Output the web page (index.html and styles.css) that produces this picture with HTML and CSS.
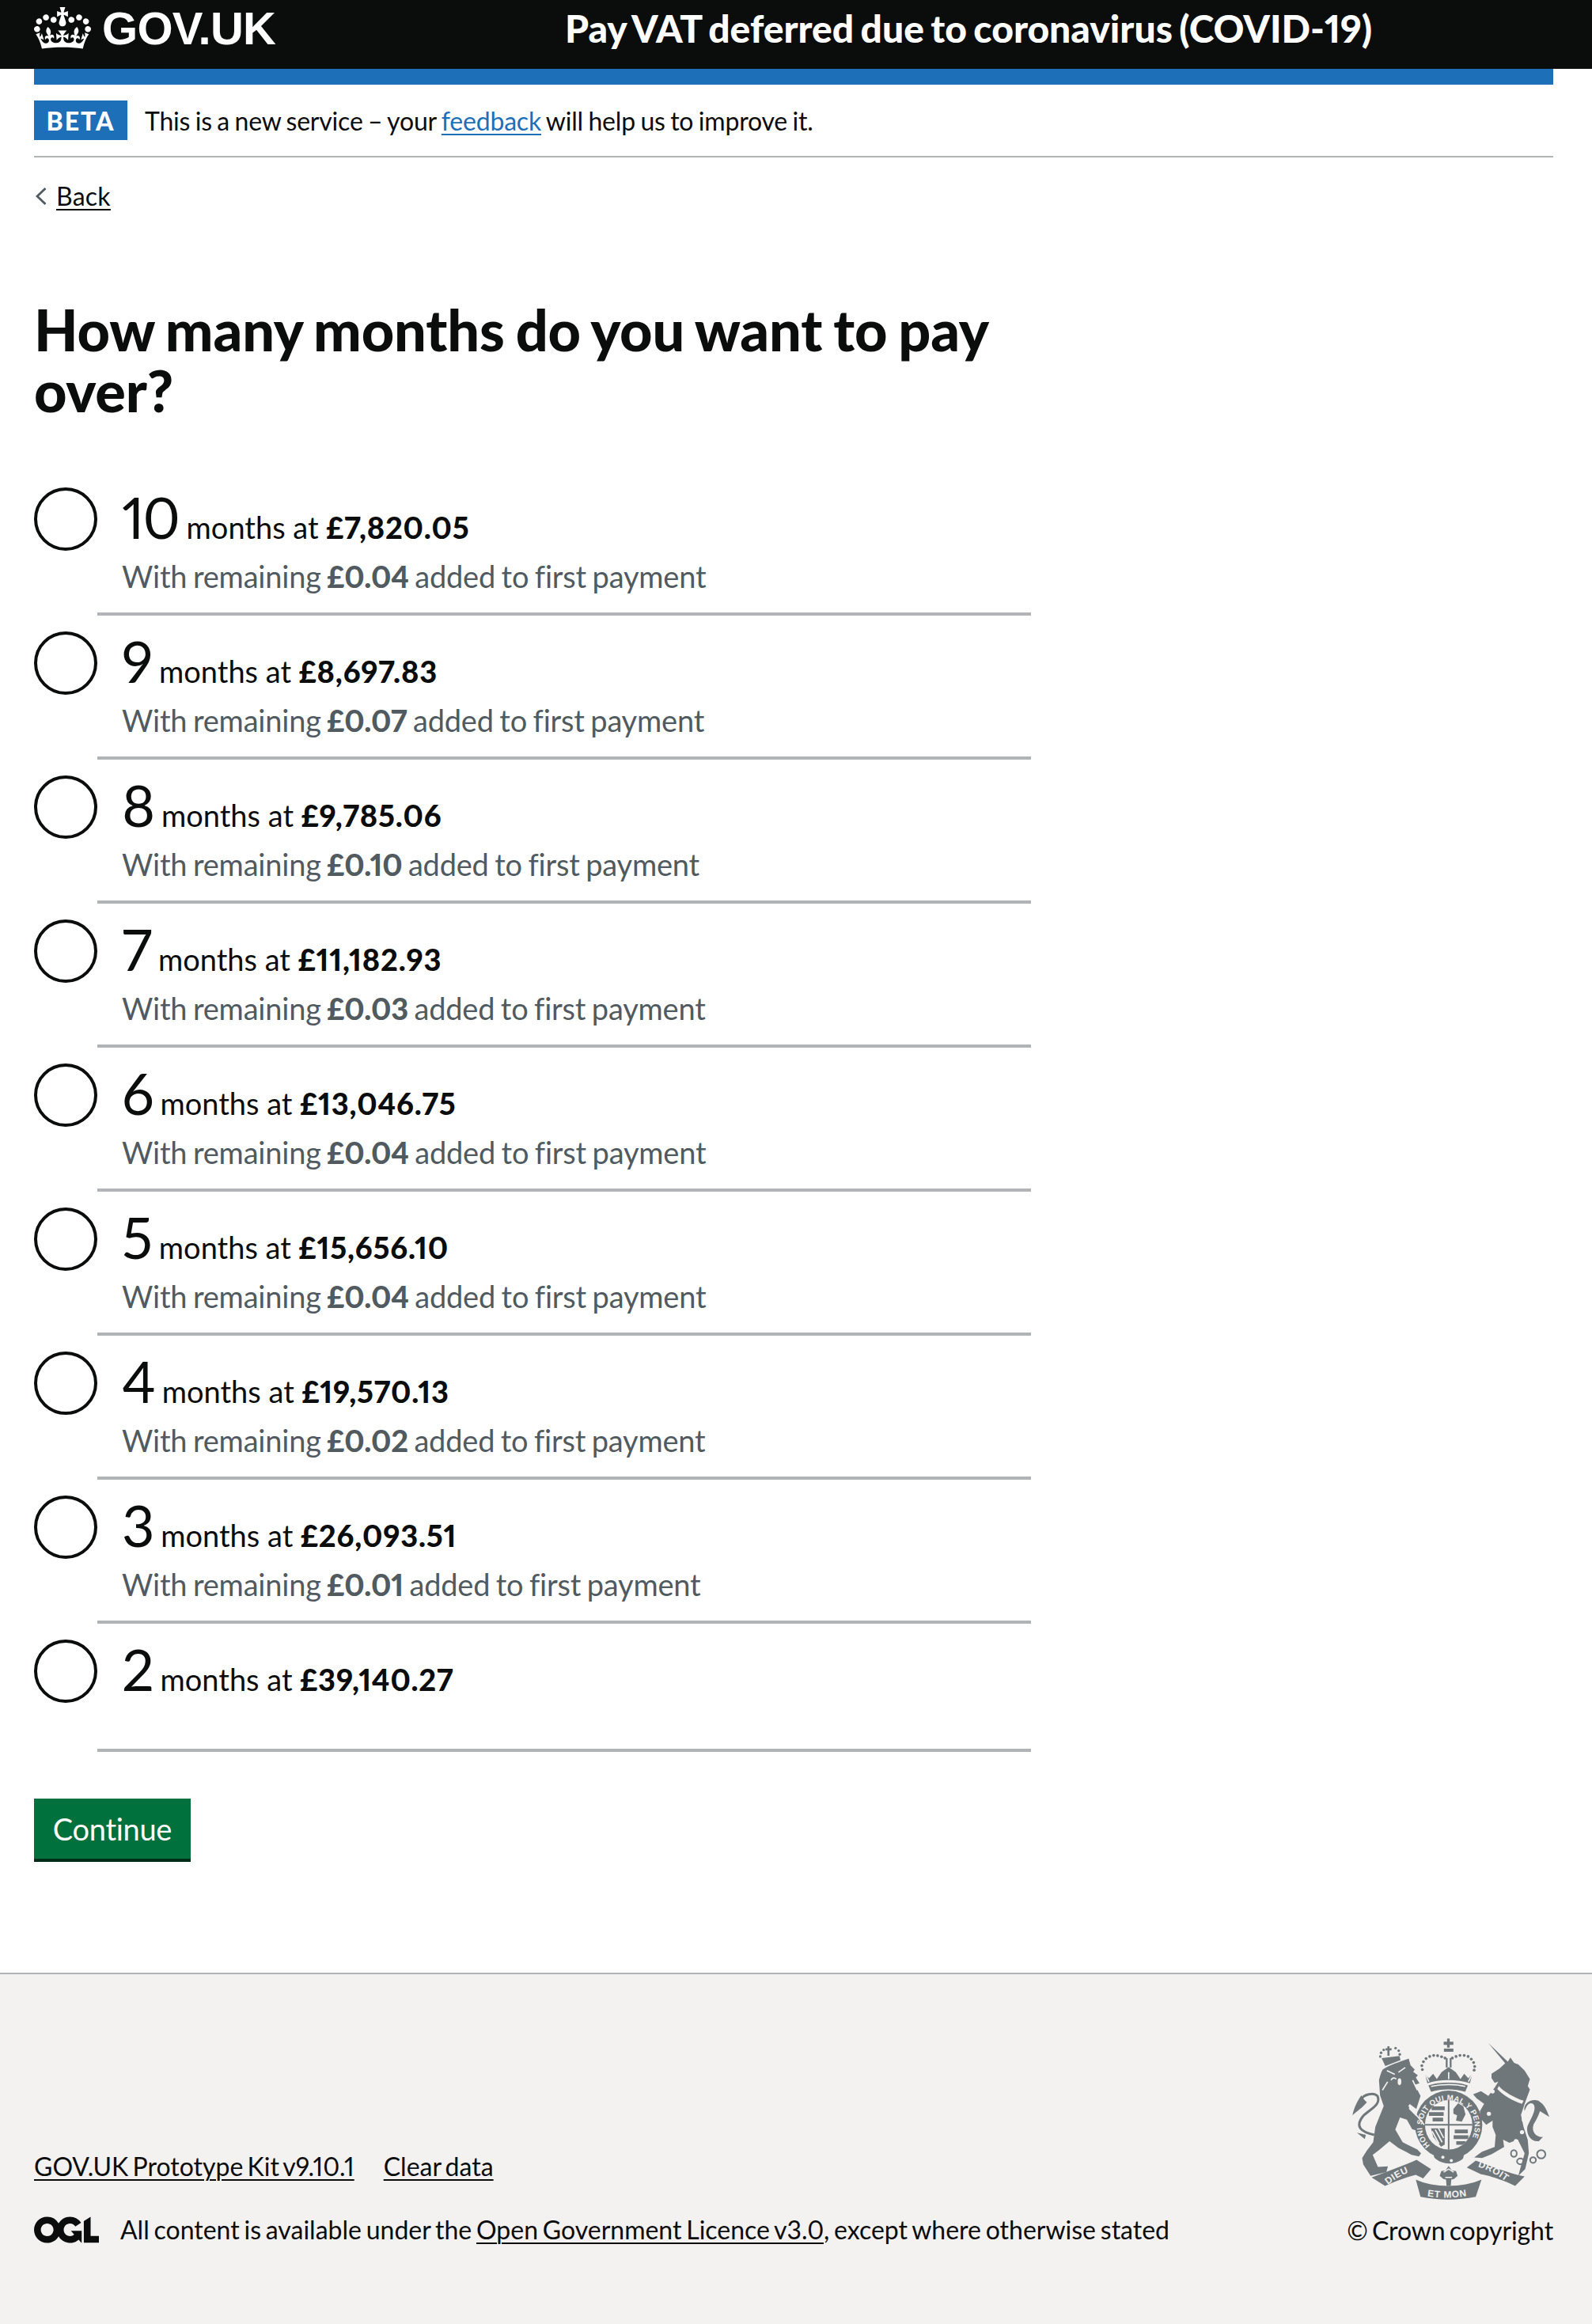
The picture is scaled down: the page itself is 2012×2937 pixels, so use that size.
FILE: index.html
```html
<!DOCTYPE html>
<html lang="en">
<head>
<meta charset="utf-8">
<title>How many months do you want to pay over?</title>
<link rel="stylesheet" href="styles.css">
</head>
<body>
<header class="top">
  <div class="top-inner">
    <a class="logo" href="#">
      <svg class="crown" viewBox="0 0 132 97" aria-hidden="true"><path fill="#fff" fill-rule="evenodd" d="M25 30.2c3.5 1.5 7.7-.2 9.1-3.7 1.5-3.6-.2-7.8-3.9-9.2-3.6-1.4-7.6.3-9.1 3.9-1.4 3.5.3 7.5 3.9 9zM9 39.5c3.6 1.5 7.8-.2 9.2-3.7 1.5-3.6-.2-7.8-3.9-9.1-3.6-1.5-7.6.2-9.1 3.8-1.4 3.5.3 7.5 3.8 9zM4.4 57.2c3.5 1.5 7.7-.2 9.1-3.8 1.5-3.6-.2-7.7-3.9-9.1-3.5-1.5-7.6.3-9.1 3.8-1.4 3.5.3 7.6 3.9 9.1zm38.3-21.4c3.5 1.5 7.7-.2 9.1-3.8 1.5-3.6-.2-7.7-3.9-9.1-3.6-1.5-7.6.3-9.1 3.8-1.3 3.6.4 7.7 3.9 9.1zm64.4-5.6c-3.6 1.5-7.8-.2-9.1-3.7-1.5-3.6.2-7.8 3.8-9.2 3.6-1.4 7.7.3 9.2 3.9 1.3 3.5-.4 7.5-3.9 9zm15.9 9.3c-3.6 1.5-7.7-.2-9.1-3.7-1.5-3.6.2-7.8 3.7-9.1 3.6-1.5 7.7.2 9.2 3.8 1.5 3.5-.3 7.5-3.8 9zm4.7 17.7c-3.6 1.5-7.8-.2-9.2-3.8-1.5-3.6.2-7.7 3.9-9.1 3.6-1.5 7.7.3 9.2 3.8 1.3 3.5-.4 7.6-3.9 9.1zM89.3 35.8c-3.6 1.5-7.8-.2-9.2-3.8-1.4-3.6.2-7.7 3.9-9.1 3.6-1.5 7.7.3 9.2 3.8 1.4 3.6-.3 7.7-3.9 9.1zM69.7 17.7l8.9 4.7V9.3l-8.9 2.8c-.2-.3-.5-.6-.9-.9L72.4 0H59.6l3.5 11.2c-.3.3-.6.5-.9.9l-8.8-2.8v13.1l8.8-4.7c.3.3.6.7.9.9l-5 15.4v.1c-.2.8-.4 1.6-.4 2.4 0 4.1 3.1 7.5 7 8.1h.2c.3 0 .7.1 1 .1.4 0 .7 0 1-.1h.2c4-.6 7.1-4.1 7.1-8.1 0-.8-.1-1.7-.4-2.4V34l-5.1-15.4c.4-.2.7-.6 1-.9zM66 92.8c16.9 0 32.8 1.1 47.1 3.2 4-16.9 8.9-26.7 14-33.5l-9.6-3.4c1 4.9 1.1 7.2 0 10.2-1.5-1.4-3-4.3-4.2-8.7L108.6 76c2.8-2 5-3.2 7.5-3.3-4.4 9.4-10 11.9-13.6 11.2-4.3-.8-6.3-4.6-5.6-7.9 1-4.7 5.7-5.9 8-.5 4.3-8.7-3-11.4-7.6-8.8 7.1-7.2 7.9-13.5 2.1-21.1-8 6.1-8.1 12.3-4.5 20.8-4.7-5.4-12.1-2.5-9.5 6.2 3.4-5.2 7.9-2 7.2 3.1-.6 4.3-6.4 7.8-13.5 7.2-10.3-.9-10.9-8-11.2-13.8 2.5-.5 7.1 1.8 11 7.3L80.2 60c-4.1 4.4-8 5.3-12.3 5.4 1.4-4.4 8-11.6 8-11.6H55.5s6.4 7.2 7.9 11.6c-4.2-.1-8-1-12.3-5.4l1.4 16.4c3.9-5.5 8.5-7.7 10.9-7.3-.3 5.8-.9 12.8-11.1 13.8-7.2.6-12.9-2.9-13.5-7.2-.7-5 3.8-8.3 7.1-3.1 2.7-8.7-4.6-11.6-9.4-6.2 3.7-8.5 3.6-14.7-4.6-20.8-5.8 7.6-5 13.9 2.2 21.1-4.7-2.6-11.9.1-7.7 8.8 2.3-5.5 7.1-4.2 8.1.5.7 3.3-1.3 7.1-5.7 7.9-3.5.7-9-1.8-13.5-11.2 2.5.1 4.7 1.3 7.5 3.3l-4.7-15.4c-1.2 4.4-2.7 7.2-4.3 8.7-1.1-3-.9-5.3 0-10.2l-9.5 3.4c5 6.9 9.9 16.7 14 33.5 14.8-2.1 30.8-3.2 47.7-3.2z"/></svg>
      <span class="logo-text">GOV.UK</span>
    </a>
    <a class="service" href="#">Pay VAT deferred due to coronavirus (COVID-19)</a>
  </div>
</header>
<div class="wrap">
  <div class="blue-bar"></div>
  <div class="phase">
    <strong class="tag">BETA</strong>
    <span class="phase-text">This is a new service – your <a class="link-blue" href="#">feedback</a> will help us to improve it.</span>
  </div>
  <a class="back" href="#"><svg class="chev" viewBox="0 0 14 22" aria-hidden="true"><path d="M12.5 1 2 11l10.5 10" fill="none" stroke="#505a5f" stroke-width="2.8"/></svg><span class="back-text">Back</span></a>
  <main>
    <h1 class="title">How many months do you want to pay over?</h1>
    <form class="rows">
      <label class="row"><input class="radio" type="radio" name="m"><span class="body"><span class="main-line"><span class="num">10</span> months at <b>£7,820.05</b></span><span class="hint">With remaining <b>£0.04</b> added to first payment</span></span></label>
      <label class="row"><input class="radio" type="radio" name="m"><span class="body"><span class="main-line"><span class="num">9</span> months at <b>£8,697.83</b></span><span class="hint">With remaining <b>£0.07</b> added to first payment</span></span></label>
      <label class="row"><input class="radio" type="radio" name="m"><span class="body"><span class="main-line"><span class="num">8</span> months at <b>£9,785.06</b></span><span class="hint">With remaining <b>£0.10</b> added to first payment</span></span></label>
      <label class="row"><input class="radio" type="radio" name="m"><span class="body"><span class="main-line"><span class="num">7</span> months at <b>£11,182.93</b></span><span class="hint">With remaining <b>£0.03</b> added to first payment</span></span></label>
      <label class="row"><input class="radio" type="radio" name="m"><span class="body"><span class="main-line"><span class="num">6</span> months at <b>£13,046.75</b></span><span class="hint">With remaining <b>£0.04</b> added to first payment</span></span></label>
      <label class="row"><input class="radio" type="radio" name="m"><span class="body"><span class="main-line"><span class="num">5</span> months at <b>£15,656.10</b></span><span class="hint">With remaining <b>£0.04</b> added to first payment</span></span></label>
      <label class="row"><input class="radio" type="radio" name="m"><span class="body"><span class="main-line"><span class="num">4</span> months at <b>£19,570.13</b></span><span class="hint">With remaining <b>£0.02</b> added to first payment</span></span></label>
      <label class="row"><input class="radio" type="radio" name="m"><span class="body"><span class="main-line"><span class="num">3</span> months at <b>£26,093.51</b></span><span class="hint">With remaining <b>£0.01</b> added to first payment</span></span></label>
      <label class="row row-last"><input class="radio" type="radio" name="m"><span class="body"><span class="main-line"><span class="num">2</span> months at <b>£39,140.27</b></span></span></label>
      <button class="continue" type="button">Continue</button>
    </form>
  </main>
</div>
<footer class="foot">
  <div class="foot-inner">
    <div class="foot-left">
      <div class="foot-links"><a href="#">GOV.UK Prototype Kit v9.10.1</a><a href="#">Clear data</a></div>
      <div class="licence">
        <svg class="ogl" viewBox="0 0 483.2 195.7" aria-hidden="true"><path fill="#0b0c0c" d="M421.5 142.8V.1l-50.7 32.3v161.1h112.4v-50.7zm-122.3-9.6A47.12 47.12 0 0 1 221 97.8c0-26 21.1-47.1 47.1-47.1 16.7 0 31.4 8.7 39.7 21.8l42.7-27.2A97.63 97.63 0 0 0 268.1 0c-36.5 0-68.3 20.1-85.1 49.7A98 98 0 0 0 97.8 0C43.9 0 0 43.9 0 97.8s43.9 97.8 97.8 97.8c36.5 0 68.3-20.1 85.1-49.7a97.76 97.76 0 0 0 149.6 25.4l19.4 22.2h3v-87.8h-80l24.3 27.5zM97.8 145c-26 0-47.1-21.1-47.1-47.1s21.1-47.1 47.1-47.1 47.2 21 47.2 47S123.8 145 97.8 145"/></svg>
        <span>All content is available under the <a href="#">Open Government Licence v3.0</a>, except where otherwise stated</span>
      </div>
    </div>
    <div class="foot-right">
      <svg class="crest" viewBox="165 100 760 620" aria-hidden="true">
        <defs>
          <clipPath id="shieldClip"><ellipse cx="537" cy="432" rx="90" ry="94"/></clipPath>
          <path id="garterArc" d="M466 510A100 100 0 1 1 606 510"/>
          <path id="ribLeft" d="M306 660C340 632 380 612 416 602"/>
          <path id="ribMid" d="M448 702C500 712 570 712 626 698"/>
          <path id="ribRight" d="M648 592C690 604 735 628 772 662"/>
        </defs>
        <g class="crest-fill">
          <path d="M272 262C276 246 280 232 286 222C310 205 350 192 385 180L392 205L408 222L402 230L420 244L412 252L426 274L408 280L430 322L414 372L388 352L386 372L424 410L444 442L428 458L398 448L378 412L352 404L334 450L362 498L418 526L432 540L424 552L396 546L346 520L312 494L272 528L248 546L268 592L306 590L300 612L240 626L212 582L208 558L226 530L250 498L258 440L290 360L276 320Z"/>
          <path d="M205 320C186 346 176 372 171 396C190 378 208 368 226 346C216 338 210 330 205 320Z"/>
          <path d="M188 462L222 470L218 486Z"/>
          <path d="M282 178L350 170L354 186L296 208Z"/>
          <circle cx="277" cy="172" r="5"/><circle cx="280" cy="158" r="5"/><circle cx="290" cy="147" r="5"/><circle cx="335" cy="140" r="5"/><circle cx="347" cy="150" r="5"/><circle cx="351" cy="164" r="5"/>
          <path d="M297 141h7v-8h8v8h8v8h-8v20h-8v-20h-7Z"/>
          <path d="M688 121L762 192L772 176L786 196L802 202L826 226L846 258L838 284L846 298L826 352L812 394L822 440L838 490L842 540L828 600L802 626L810 596L826 540L800 488L768 500L744 488L748 516L700 544L664 558L634 556L664 534L712 516L716 470L704 440L704 416L680 432L660 410L656 380L672 352L644 332L630 316L660 304L688 322L712 290L726 268L712 272L700 254L700 238L730 218L752 198Z"/>
          <path d="M826 380C818 350 852 330 878 340C900 352 880 400 860 430C850 460 872 480 896 478L880 494C850 498 832 470 836 440C848 410 876 370 858 352C842 344 832 362 826 380Z"/>
          <path d="M870 340C896 344 908 370 920 402C905 392 890 384 876 374Z"/>
          <path d="M460 282C500 268 575 268 610 282L600 306C560 294 510 294 470 306Z"/>
          <path d="M447 238L462 255L478 238L492 258L510 232L537 212L564 232L582 258L596 238L612 255L627 238L618 274C570 258 500 258 456 274Z"/>
          <path d="M531 104h10v12h14v12h-14v10h-10v-10h-13v-12h13Z"/>
          <rect x="519" y="142" width="36" height="12"/>
          <rect x="526" y="178" width="7" height="36"/><rect x="541" y="178" width="7" height="36"/>
          <circle cx="437" cy="222" r="5.5"/><circle cx="435" cy="207" r="5.5"/><circle cx="441" cy="192" r="5.5"/><circle cx="451" cy="180" r="5.5"/><circle cx="465" cy="172" r="5.5"/><circle cx="480" cy="168" r="5.5"/><circle cx="495" cy="169" r="5.5"/><circle cx="510" cy="173" r="5.5"/><circle cx="523" cy="178" r="5.5"/>
          <circle cx="551" cy="178" r="5.5"/><circle cx="565" cy="172" r="5.5"/><circle cx="580" cy="168" r="5.5"/><circle cx="596" cy="168" r="5.5"/><circle cx="611" cy="172" r="5.5"/><circle cx="623" cy="182" r="5.5"/><circle cx="632" cy="195" r="5.5"/><circle cx="636" cy="210" r="5.5"/><circle cx="634" cy="224" r="5.5"/>
          <ellipse cx="537" cy="432" rx="128" ry="130"/>
          <path d="M476 520C510 546 566 546 600 524L592 560C565 586 510 586 482 556Z"/>
          <path d="M244 632C300 610 360 590 415 565L470 600L440 636L412 622C370 632 330 650 295 664Z"/>
          <path d="M606 594L640 568C700 590 770 618 826 628L790 664C740 640 680 622 660 620Z"/>
          <path d="M412 640C480 672 590 672 662 640L640 706C570 720 500 720 430 706Z"/>
          <path d="M537 588l12 18 16 2 6 18-14 12-10 2-2 24-16 0-2-24-10-2-14-12 6-18 16-2Z"/>
        </g>
        <g class="crest-bg">
          <circle cx="515" cy="555" r="6"/><circle cx="547" cy="568" r="6"/>
          <ellipse cx="537" cy="432" rx="90" ry="94"/>
          <ellipse cx="350" cy="268" rx="7" ry="13"/>
          <circle cx="825" cy="412" r="10"/><circle cx="816" cy="460" r="8"/><circle cx="793" cy="494" r="8"/>
          <circle cx="704" cy="305" r="8"/><circle cx="690" cy="390" r="8"/>
          <path d="M728 284C745 305 790 330 822 340L816 352C780 342 742 318 722 296Z"/>
        </g>
        <g class="crest-line">
          <path d="M302 226L332 240M372 214L346 232M338 258C330 250 322 254 318 262M385 358L444 432M285 300L305 268M400 262L418 300"/>
          <path d="M448 238L462 268M627 238L612 268M537 232V258M470 286C510 276 565 276 600 286"/>
          <path d="M518 612L537 600L556 612M524 632H550"/>
        </g>
        <g class="crest-ring">
          <ellipse cx="785" cy="541" rx="11" ry="13"/><ellipse cx="810" cy="571" rx="13" ry="11"/><circle cx="858" cy="566" r="11"/><circle cx="889" cy="544" r="16"/>
          <path class="crest-tail" d="M254 470C205 460 178 440 212 398C238 372 282 356 266 322C250 306 214 318 205 334"/>
        </g>
        <g clip-path="url(#shieldClip)">
          <g class="crest-fill">
            <path d="M472 362h50v14h-50ZM462 384h56v14h-56ZM476 405h40v14h-40ZM560 450h50v14h-50ZM556 472h56v14h-56ZM566 494h36v14h-36Z"/>
            <path d="M555 372l18-22 20 12 8 30-14 28-22-4 4-20-14-6Z"/>
            <path d="M470 445h52v62l-14 8-30-38Z"/>
          </g>
          <path class="crest-cross" d="M537 330V530M440 432H635"/>
          <path class="crest-stripes" d="M486 450l26 48M474 456l26 48M498 444l20 38"/>
        </g>
        <text class="crest-text crest-garter"><textPath href="#garterArc">HONI SOIT QUI MAL Y PENSE</textPath></text>
        <text class="crest-text crest-ribbon"><textPath href="#ribLeft">DIEU</textPath></text>
        <text class="crest-text crest-ribbon"><textPath href="#ribMid" startOffset="8">ET MON</textPath></text>
        <text class="crest-text crest-ribbon"><textPath href="#ribRight">DROIT</textPath></text>
      </svg>
      <a class="copy" href="#">© Crown copyright</a>
    </div>
  </div>
</footer>
</body>
</html>
```
FILE: styles.css
```css
* { box-sizing: border-box; }
html, body { margin: 0; padding: 0; }
body {
  font-family: "Lato", "Noto Sans", sans-serif;
  font-variant-numeric: proportional-nums;
  word-spacing: -3px;
  color: #0b0c0c;
  background: #fff;
}
a { color: inherit; text-decoration-thickness: 2px; text-underline-offset: 4px; }
b { font-weight: 900; }

.top { background: #0b0c0c; height: 87px; }
.top-inner { margin-left: 43px; width: 1920px; height: 87px; display: flex; align-items: center; }
.logo { display: flex; align-items: center; color: #fff; text-decoration: none; width: 671px; }
.crown { width: 72px; height: 53px; margin-top: -16px; }
.logo-text {
  font-family: "Liberation Sans", Arial, sans-serif;
  font-weight: 700;
  font-size: 58px;
  line-height: 1;
  margin-left: 14px;
  margin-top: -16px;
  letter-spacing: -.7px;
}
.service {
  color: #fff;
  text-decoration: none;
  font-weight: 900;
  font-size: 48px;
  line-height: 1;
  margin-top: -16px;
}

.wrap { margin-left: 43px; width: 1920px; }
.blue-bar { height: 20px; background: #1d70b8; }
.phase {
  display: flex;
  align-items: center;
  gap: 22px;
  margin-top: 20px;
  padding-bottom: 20px;
  border-bottom: 2px solid #b1b4b6;
  box-sizing: content-box;
  height: 50px;
  font-size: 32px;
}
.phase-text { word-spacing: -1.5px; letter-spacing: -.2px; }
.tag {
  background: #1d70b8;
  color: #fff;
  width: 118px;
  height: 50px;
  display: flex;
  align-items: center;
  justify-content: center;
  font-size: 32px;
  letter-spacing: 2px;
  font-weight: 900;
}
.link-blue { color: #1d70b8; }
.back { display: inline-flex; align-items: center; margin-top: 29px; font-size: 32px; line-height: 40px; }
.chev { width: 14px; height: 22px; margin: 0 12px 0 2px; }
.back-text { text-decoration: underline; text-decoration-thickness: 2px; text-underline-offset: 4px; letter-spacing: .2px; }

.title { font-size: 72px; line-height: 77px; font-weight: 900; margin: 110px 0 84px; width: 1260px; letter-spacing: -.15px; }
.rows { display: flex; flex-direction: column; }
.row { display: flex; margin-bottom: 20px; }
.radio { appearance: none; -webkit-appearance: none; width: 80px; height: 80px; border: 4px solid #0b0c0c; border-radius: 50%; margin: 0; flex: none; background: #fff; }
.body { width: 1180px; height: 162px; border-bottom: 4px solid #b1b4b6; padding-left: 31px; display: block; }
.row-last .body { height: 142px; }
.main-line { display: block; font-size: 38px; line-height: 74px; height: 80px; white-space: nowrap; word-spacing: 0; }
.main-line b { letter-spacing: .8px; }
.num { font-size: 72px; line-height: 74px; letter-spacing: -2px; }
.hint { display: block; color: #505a5f; font-size: 38px; line-height: 50px; margin-top: 7px; word-spacing: -2px; letter-spacing: -.2px; }
.continue {
  margin-top: 39px;
  width: 198px;
  height: 80px;
  background: #00703c;
  color: #fff;
  border: 0;
  border-bottom: 4px solid #002d18;
  font-family: inherit;
  font-size: 38px;
  line-height: 74px;
  letter-spacing: -.3px;
  padding: 0;
}

.foot { margin-top: 140px; border-top: 2px solid #b1b4b6; background: #f3f2f1; height: 445px; }
.foot-inner { margin-left: 43px; width: 1920px; display: flex; justify-content: space-between; align-items: flex-start; padding-top: 80px; }
.foot-left { font-size: 32px; padding-top: 143px; }
.foot-links { display: flex; gap: 37px; line-height: 40px; }
.licence { display: flex; align-items: center; gap: 27px; margin-top: 40px; word-spacing: -2.4px; }
.ogl { width: 82px; height: 34px; flex: none; }
.foot-right { display: flex; flex-direction: column; align-items: flex-end; width: 260px; font-size: 32px; }
.crest { width: 253px; height: 206px; display: block; align-self: center; }
.copy { margin-top: 18px; text-decoration: none; white-space: nowrap; line-height: 40px; letter-spacing: -.1px; }
.crest-fill { fill: #6f777b; }
.crest-bg { fill: #f3f2f1; }
.crest-line { fill: none; stroke: #f3f2f1; stroke-width: 5; }
.crest-ring { fill: none; stroke: #6f777b; stroke-width: 6; }
.crest-tail { stroke-width: 9; }
.crest-cross { fill: none; stroke: #6f777b; stroke-width: 6; }
.crest-stripes { fill: none; stroke: #f3f2f1; stroke-width: 5; }
.crest-text { fill: #f3f2f1; font-family: "Liberation Sans", sans-serif; font-weight: 700; word-spacing: 0; }
.crest-garter { font-size: 29px; letter-spacing: 1px; }
.crest-ribbon { font-size: 36px; letter-spacing: 2px; }
```
